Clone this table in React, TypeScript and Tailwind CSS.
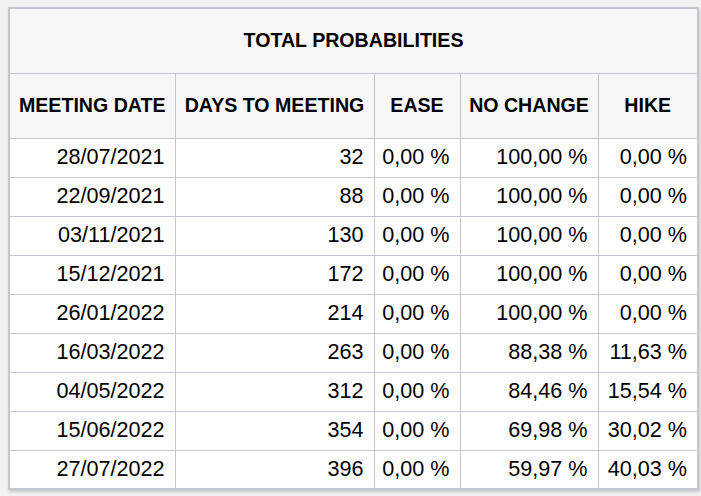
const rows: [string, number, string, string, string][] = [
  ['28/07/2021', 32, '0,00 %', '100,00 %', '0,00 %'],
  ['22/09/2021', 88, '0,00 %', '100,00 %', '0,00 %'],
  ['03/11/2021', 130, '0,00 %', '100,00 %', '0,00 %'],
  ['15/12/2021', 172, '0,00 %', '100,00 %', '0,00 %'],
  ['26/01/2022', 214, '0,00 %', '100,00 %', '0,00 %'],
  ['16/03/2022', 263, '0,00 %', '88,38 %', '11,63 %'],
  ['04/05/2022', 312, '0,00 %', '84,46 %', '15,54 %'],
  ['15/06/2022', 354, '0,00 %', '69,98 %', '30,02 %'],
  ['27/07/2022', 396, '0,00 %', '59,97 %', '40,03 %'],
]

const headers = ['MEETING DATE', 'DAYS TO MEETING', 'EASE', 'NO CHANGE', 'HIKE']

export default function App() {
  return (
    <div className="min-h-screen bg-[#f2f2f2] pl-[8px] pt-[7px] font-['Liberation_Sans',Arial,sans-serif] text-black">
      <table className="w-[689px] table-fixed border-collapse border-2 border-[#c3c5cf] bg-white shadow-[1px_2px_3px_rgba(0,0,0,0.18)]">
        <colgroup>
          <col className="w-[166px]" />
          <col className="w-[199px]" />
          <col className="w-[86px]" />
          <col className="w-[138px]" />
          <col className="w-[100px]" />
        </colgroup>
        <thead>
          <tr>
            <th
              colSpan={5}
              className="h-[65px] border border-[#c3c5cf] bg-[#f7f7f7] p-0 text-center text-[19.6px] font-bold"
            >
              TOTAL PROBABILITIES
            </th>
          </tr>
          <tr>
            {headers.map((h) => (
              <th
                key={h}
                className="h-[65px] whitespace-nowrap border border-[#c3c5cf] bg-[#f7f7f7] p-0 text-center text-[19.6px] font-bold"
              >
                {h}
              </th>
            ))}
          </tr>
        </thead>
        <tbody>
          {rows.map((r) => (
            <tr key={r[0]}>
              {r.map((cell, i) => (
                <td
                  key={i}
                  className="h-[39px] whitespace-nowrap border border-[#c3c5cf] py-0 pr-[10px] pl-0 text-right text-[21.6px]"
                >
                  {cell}
                </td>
              ))}
            </tr>
          ))}
        </tbody>
      </table>
    </div>
  )
}
